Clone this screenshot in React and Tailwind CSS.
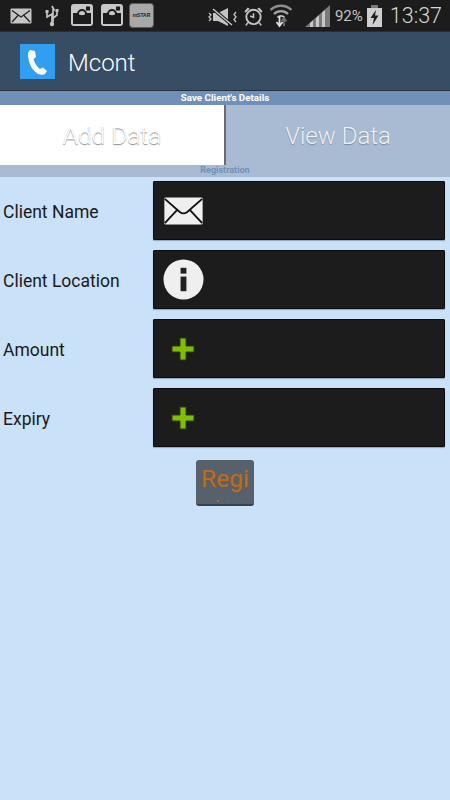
import React from 'react';

const InstaIcon = ({ className }) => (
  <svg width="22" height="22" viewBox="0 0 22 22" className={`mt-[4px] ${className}`}>
    <rect x="0" y="0" width="22" height="22" rx="3" fill="#c8c8c8" />
    <path d="M2 9 H6.5 A5.5 5.5 0 0 0 15.5 9 H20 V20 H2 Z" fill="#1c1c1c" />
    <circle cx="11" cy="10" r="4" fill="none" stroke="#1c1c1c" strokeWidth="2" />
    <rect x="15" y="2.5" width="4" height="4" fill="#1c1c1c" />
  </svg>
);

const StatusIcons = () => (
  <>
    <svg width="22" height="16" viewBox="0 0 22 16" className="ml-[10px] mt-[8px]">
      <rect x="0.5" y="0.5" width="21" height="15" rx="1" fill="#c4c4c4" />
      <path d="M2 2.5 L11 9 L20 2.5 M2 14 L8 7.5 M20 14 L14 7.5" stroke="#222" strokeWidth="1.3" fill="none" />
    </svg>
    <svg width="16" height="22" viewBox="0 0 16 22" className="ml-[12px] mt-[5px]">
      <path d="M8 1 L10 5 H9 V17 M8 19 V9 L3 12 V7 M8 14 L13 10 V6" stroke="#c4c4c4" strokeWidth="1.7" fill="none" />
      <circle cx="8" cy="19" r="2.2" fill="#c4c4c4" />
      <rect x="1.5" y="5" width="3" height="3" fill="#c4c4c4" />
      <rect x="11.5" y="4" width="3" height="3" fill="#c4c4c4" />
    </svg>
    <InstaIcon className="ml-[11px]" />
    <InstaIcon className="ml-[8px]" />
    <div className="ml-[7px] mt-[4px] flex h-[23px] w-[23px] items-center justify-center rounded-[2px] bg-[#a8a8a8] text-[5px] font-bold text-[#222] outline outline-1 outline-[#5c5c5c]">
      <span className="font-['Liberation_Sans',sans-serif]">mSTAR</span>
    </div>
  </>
);

const RightStatus = () => (
  <>
    <svg width="29" height="20" viewBox="0 0 29 20" className="mt-[7px]">
      <path d="M1 6 L3 8 L1 10 L3 12 L1 14 M28 5 L26 7.5 L28 10 L26 12.5 L28 15" stroke="#c4c4c4" strokeWidth="1.3" fill="none" />
      <path d="M5 6 H10 L20 1 V19 L10 14 H5 Z" fill="#c4c4c4" />
      <path d="M5 2 L24 18" stroke="#1c1c1c" strokeWidth="3.5" />
      <path d="M5 2 L24 18" stroke="#c4c4c4" strokeWidth="1.5" />
    </svg>
    <svg width="21" height="22" viewBox="0 0 22 22" className="ml-[6px] mt-[5px]">
      <circle cx="11" cy="12" r="7.5" fill="none" stroke="#c4c4c4" strokeWidth="2" />
      <path d="M11 8 V12.5 L7.5 11" stroke="#c4c4c4" strokeWidth="1.6" fill="none" />
      <path d="M1.5 6 L5 2 L7 3.5 L3 7.5 Z M20.5 6 L17 2 L15 3.5 L19 7.5 Z" fill="#c4c4c4" />
      <path d="M5 18 L3 21 M17 18 L19 21" stroke="#c4c4c4" strokeWidth="1.6" />
    </svg>
    <svg width="22" height="24" viewBox="0 0 22 24" className="ml-[6px] mt-[4px]">
      <path d="M0.5 6 A15 15 0 0 1 21.5 6" stroke="#8d8d8d" strokeWidth="2.4" fill="none" />
      <path d="M4 10 A10 10 0 0 1 18 10" stroke="#a5a5a5" strokeWidth="2.2" fill="none" />
      <path d="M7.5 13.5 A5 5 0 0 1 14.5 13.5" stroke="#c0c0c0" strokeWidth="2" fill="none" />
      <path d="M9.5 12 V21 M6.5 18 L9.5 22 L12.5 18" stroke="#e0e0e0" strokeWidth="1.8" fill="none" />
      <path d="M14 22 V15 M11.5 17.5 L14 14 L16.5 17.5" stroke="#707070" strokeWidth="1.8" fill="none" />
    </svg>
    <svg width="25" height="22" viewBox="0 0 25 22" className="ml-[13px] mt-[5px]">
      <path d="M0 22 L25 0 V22 Z" fill="#7a7a7a" />
      <path d="M5 22 V18 L8 15.5 V22 Z M11 22 V13 L14 10.5 V22 Z M17 22 V7.5 L20 5 V22 Z" fill="#c8c8c8" />
    </svg>
    <span className="ml-[5px] mt-[6px] text-[15px] leading-[20px] text-[#c4c4c4]">92%</span>
    <svg width="15" height="22" viewBox="0 0 15 22" className="ml-[4px] mt-[5px]">
      <rect x="4" y="0" width="7" height="3" fill="#7a7a7a" />
      <rect x="0" y="3" width="15" height="19" fill="#cfcfcf" />
      <path d="M9 5 L3.5 13 H7 L5.5 20 L11.5 10.5 H8 Z" fill="#1c1c1c" />
    </svg>
    <span className="ml-[8px] mt-[2px] text-[21.5px] font-light leading-[28px] text-[#d8d8d8]">13:37</span>
  </>
);

const fields = [
  { label: 'Client Name', icon: 'mail' },
  { label: 'Client Location', icon: 'info' },
  { label: 'Amount', icon: 'plus' },
  { label: 'Expiry', icon: 'plus' },
];

const FieldIcon = ({ type }) => {
  if (type === 'mail') {
    return (
      <svg width="41" height="28" viewBox="0 0 42 30">
        <rect x="0.5" y="0.5" width="41" height="29" rx="1.5" fill="#efefef" />
        <path d="M1 2 L17 16 Q21 19 25 16 L41 2 M1 28 L14 14 M41 28 L28 14" stroke="#111" strokeWidth="2" fill="none" />
      </svg>
    );
  }
  if (type === 'info') {
    return (
      <svg width="41" height="41" viewBox="0 0 42 42">
        <circle cx="21" cy="21" r="20.5" fill="#efefef" />
        <rect x="18" y="9" width="6" height="6" fill="#222" />
        <rect x="18" y="18" width="6" height="15" fill="#222" />
      </svg>
    );
  }
  return (
    <svg width="24" height="24" viewBox="0 0 24 24">
      <path d="M9 1 H15 V9 H23 V15 H15 V23 H9 V15 H1 V9 H9 Z" fill="#7fbf00" stroke="#2c3a10" strokeWidth="1" />
    </svg>
  );
};

export default function App() {
  return (
    <div className="flex h-[800px] w-[450px] flex-col overflow-hidden bg-[#c9e1f9] font-['Roboto',sans-serif]">
      {/* status bar */}
      <div className="flex h-[31px] justify-between bg-[#1c1c1c]">
        <div className="flex items-start"><StatusIcons /></div>
        <div className="flex items-start pr-[8px]"><RightStatus /></div>
      </div>

      {/* action bar */}
      <div className="flex h-[60px] items-center border-y border-y-[#22303f] bg-[#364d64] pl-[20px]">
        <div className="flex h-[35px] w-[35px] items-center justify-center bg-[#319ff0]">
          <svg width="35" height="35" viewBox="0 0 35 35">
            <path d="M10 6 L15 7 L16 13 L13.5 15 Q15 21 20 25 L23 23.5 L27 27 L25 30 Q22 31.5 18 30 Q9 24 8 12 Q7.5 8 10 6 Z" fill="#fff" />
          </svg>
        </div>
        <span className="ml-[13px] pt-[3px] text-[24px] font-light text-white">Mcont</span>
      </div>

      <div className="flex h-[14px] items-center justify-center bg-[#7090b7] text-[9.8px] font-bold text-white">
        Save Client's Details
      </div>

      {/* tabs */}
      <div className="flex h-[60px]">
        <div className="flex w-[226px] items-center justify-center border-r-2 border-r-[#6b6b6b] bg-white pt-[2px] text-[24.5px] font-light text-white [text-shadow:0_1px_1px_#888]">
          Add Data
        </div>
        <div className="flex w-[224px] items-center justify-center bg-[#a9bbd3] pt-[2px] text-[24px] font-light text-[#eef1f6] [text-shadow:0_1px_1px_#7a8797]">
          View Data
        </div>
      </div>

      <div className="flex h-[12px] items-center justify-center bg-[#a9bbd3] text-[9px] font-bold text-[#7090b7]">
        Registration
      </div>

      {/* form */}
      <div className="flex flex-col gap-[10px] pt-[4px]">
        {fields.map(f => (
          <div key={f.label} className="flex h-[59px] items-center">
            <span className="w-[153px] pl-[3px] pt-[4px] text-[17.5px] text-[#1a1a1a]">{f.label}</span>
            <div className="flex h-[59px] w-[292px] items-center rounded-[1px] border border-[#0c0c0c] bg-[#1c1c1c] shadow-[0_1px_1px_#8fa3b8]">
              <div className="flex w-[58px] justify-center"><FieldIcon type={f.icon} /></div>
            </div>
          </div>
        ))}
      </div>

      <div className="mt-[13px] ml-[196px] flex h-[46px] w-[58px] flex-col items-center rounded-[3px] border-b-2 border-b-[#39414a] bg-[#57616b] text-[24.5px] leading-[38px] text-[#c66a10]">
        Regi
        <div className="mt-[2px] flex items-center gap-[8px]">
          <span className="h-[1px] w-[2px] bg-[#77665a]" />
          <span className="h-[2px] w-[2px] bg-[#c66a10]" />
          <span className="h-[1px] w-[2px] bg-[#77665a]" />
          <span className="ml-[4px] h-[1px] w-[2px] bg-[#77665a]" />
        </div>
      </div>
    </div>
  );
}
